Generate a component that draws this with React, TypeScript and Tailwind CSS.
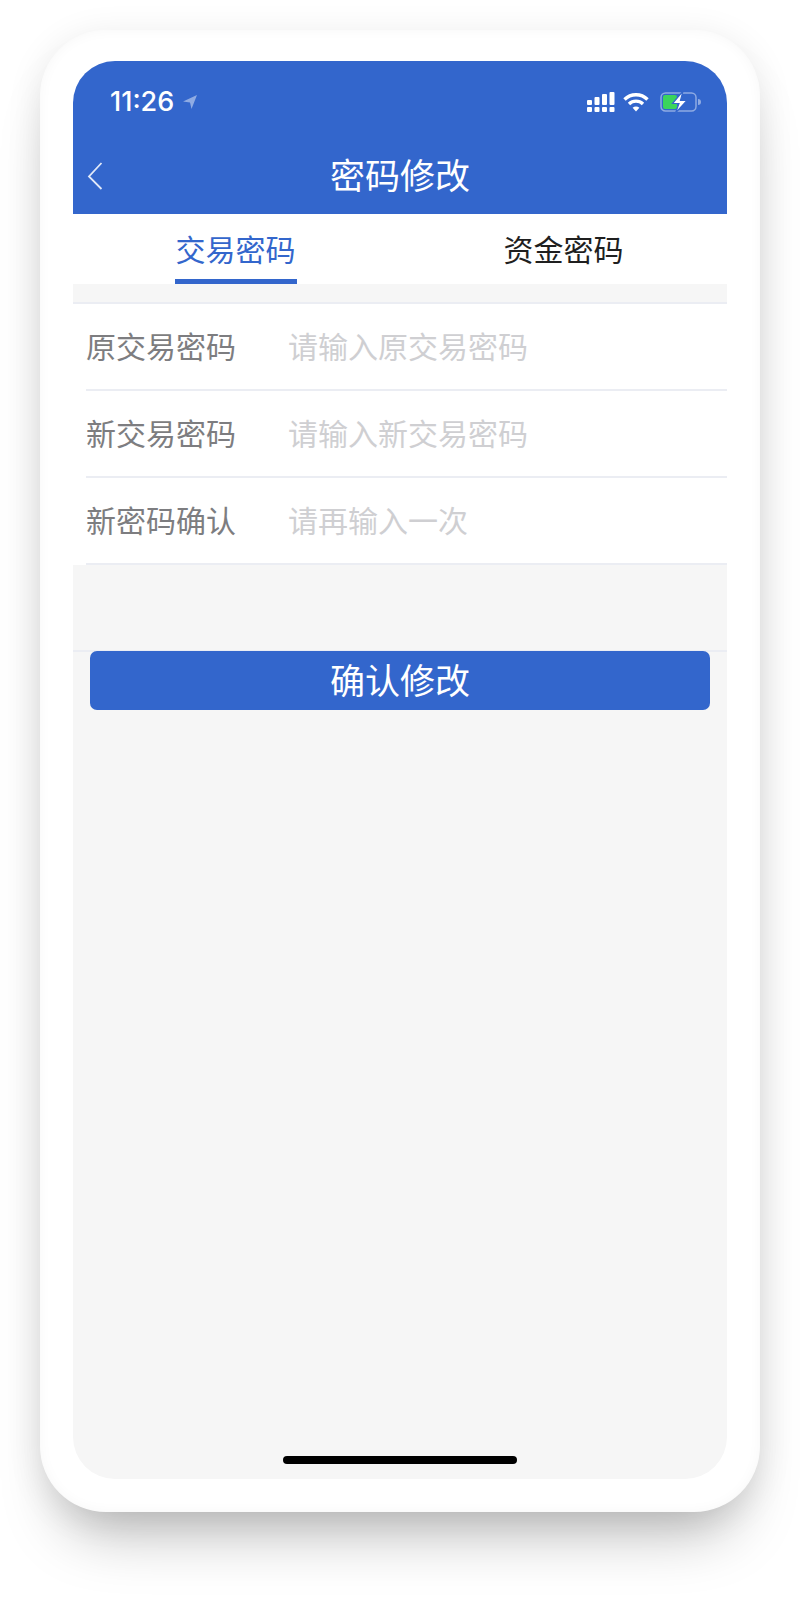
const cjk = "font-['Noto_Sans_CJK_SC','Noto_Sans',sans-serif]";

function Row({ label, placeholder }: { label: string; placeholder: string }) {
  return (
    <div className="ml-[13px] flex h-[87px] items-center border-b-2 border-[#ebedf3] pb-[4px]">
      <span className="w-[202px] text-[30px] leading-none text-[#7d7d80]">{label}</span>
      <span className="text-[30px] leading-none text-[#cfcfd2]">{placeholder}</span>
    </div>
  );
}

function StatusIcons() {
  return (
    <div className="flex items-center gap-[8px]">
      <svg width="28" height="20" viewBox="0 0 28 20" fill="#fff">
        <rect x="0" y="8" width="5" height="5" rx="1" />
        <rect x="0" y="15" width="5" height="5" rx="1" />
        <rect x="7.5" y="5" width="5" height="8" rx="1" />
        <rect x="7.5" y="15" width="5" height="5" rx="1" />
        <rect x="15" y="2" width="5" height="11" rx="1" />
        <rect x="15" y="15" width="5" height="5" rx="1" />
        <rect x="22.5" y="0" width="5" height="13" rx="1" />
        <rect x="22.5" y="15" width="5" height="5" rx="1" />
      </svg>
      <svg width="26" height="20" viewBox="0 0 26 20" fill="none" stroke="#fff" strokeWidth="3.4" className="mr-[1px]">
        <path d="M1.5 7.5C7.8 1.2 18.2 1.2 24.5 7.5" />
        <path d="M6 12C10 8.2 16 8.2 20 12" />
        <path d="M13 19.5L9.6 15.8C11.6 14.2 14.4 14.2 16.4 15.8Z" fill="#fff" stroke="none" />
      </svg>
      <svg width="42" height="22" viewBox="0 0 42 22" className="ml-[2px]">
        <rect x="1" y="2" width="35" height="18" rx="4.5" fill="none" stroke="#fff" strokeOpacity="0.45" strokeWidth="1.5" />
        <rect x="3" y="4" width="14" height="14" rx="2" fill="#3ad45c" />
        <path d="M38 8v6c2 0 3-1.2 3-3s-1-3-3-3Z" fill="#fff" fillOpacity="0.45" />
        <path d="M23 0L12.5 12.5H19L15.5 22L27 9.5H20.5Z" fill="#fff" stroke="#3366cc" strokeWidth="1.2" />
      </svg>
    </div>
  );
}

export default function App() {
  return (
    <div className={`h-[1624px] w-[800px] overflow-hidden bg-white pt-[30px] ${cjk}`}>
      <div className="mx-auto h-[1482px] w-[720px] rounded-[66px] bg-white px-[33px] py-[31px] shadow-[0_42px_60px_-22px_rgba(0,0,0,0.27),0_6px_36px_rgba(0,0,0,0.09),inset_0_0_14px_rgba(0,0,0,0.035)]">
        <div className="relative flex h-[1418px] flex-col overflow-hidden rounded-[42px] bg-[#f6f6f6]">
          <header className="h-[153px] bg-[#3366cc] text-white">
            <div className="flex h-[80px] items-center justify-between pl-[37px] pr-[25px] pt-[1px]">
              <div className="flex items-center gap-[9px]">
                <span className="font-['Inter',sans-serif] text-[27px] font-medium leading-none">11:26</span>
                <svg width="14" height="14" viewBox="0 0 14 14" fill="#fff" fillOpacity="0.45">
                  <path d="M14 0L0 6.5L7 7.5L8.5 14Z" />
                </svg>
              </div>
              <StatusIcons />
            </div>
            <div className="relative flex h-[72px] items-center justify-center pb-[7px]">
              <svg className="absolute left-[14px] top-[20px]" width="16" height="30" viewBox="0 0 16 30" fill="none" stroke="#fff" strokeOpacity="0.85" strokeWidth="1.8">
                <path d="M14.5 2L2 15.5L14.5 28" />
              </svg>
              <span className="text-[35px] font-normal leading-none">密码修改</span>
            </div>
          </header>

          <nav className="flex h-[70px] bg-white">
            <div className="flex w-1/2 flex-col items-center justify-end pr-[2px]">
              <span className="mb-[16px] text-[30px] leading-none text-[#3366cc]">交易密码</span>
              <div className="h-[5px] w-[122px] bg-[#3366cc]" />
            </div>
            <div className="flex w-1/2 flex-col items-center justify-end">
              <span className="mb-[21px] text-[30px] leading-none text-[#1f1f1f]">资金密码</span>
            </div>
          </nav>

          <div className="mt-[18px] border-t-2 border-[#ebedf3] bg-white">
            <Row label="原交易密码" placeholder="请输入原交易密码" />
            <Row label="新交易密码" placeholder="请输入新交易密码" />
            <Row label="新密码确认" placeholder="请再输入一次" />
          </div>

          <div className="mt-[85px] border-t-2 border-[#ebedf3]">
            <button className="mx-[17px] -mt-[1px] flex h-[59px] w-[620px] items-center justify-center rounded-[7px] bg-[#3366cc] pb-[5px] text-[35px] font-normal leading-none text-white">
              确认修改
            </button>
          </div>

          <div className="absolute bottom-[15px] left-1/2 h-[8px] w-[234px] -translate-x-1/2 rounded-full bg-black" />
        </div>
      </div>
    </div>
  );
}
